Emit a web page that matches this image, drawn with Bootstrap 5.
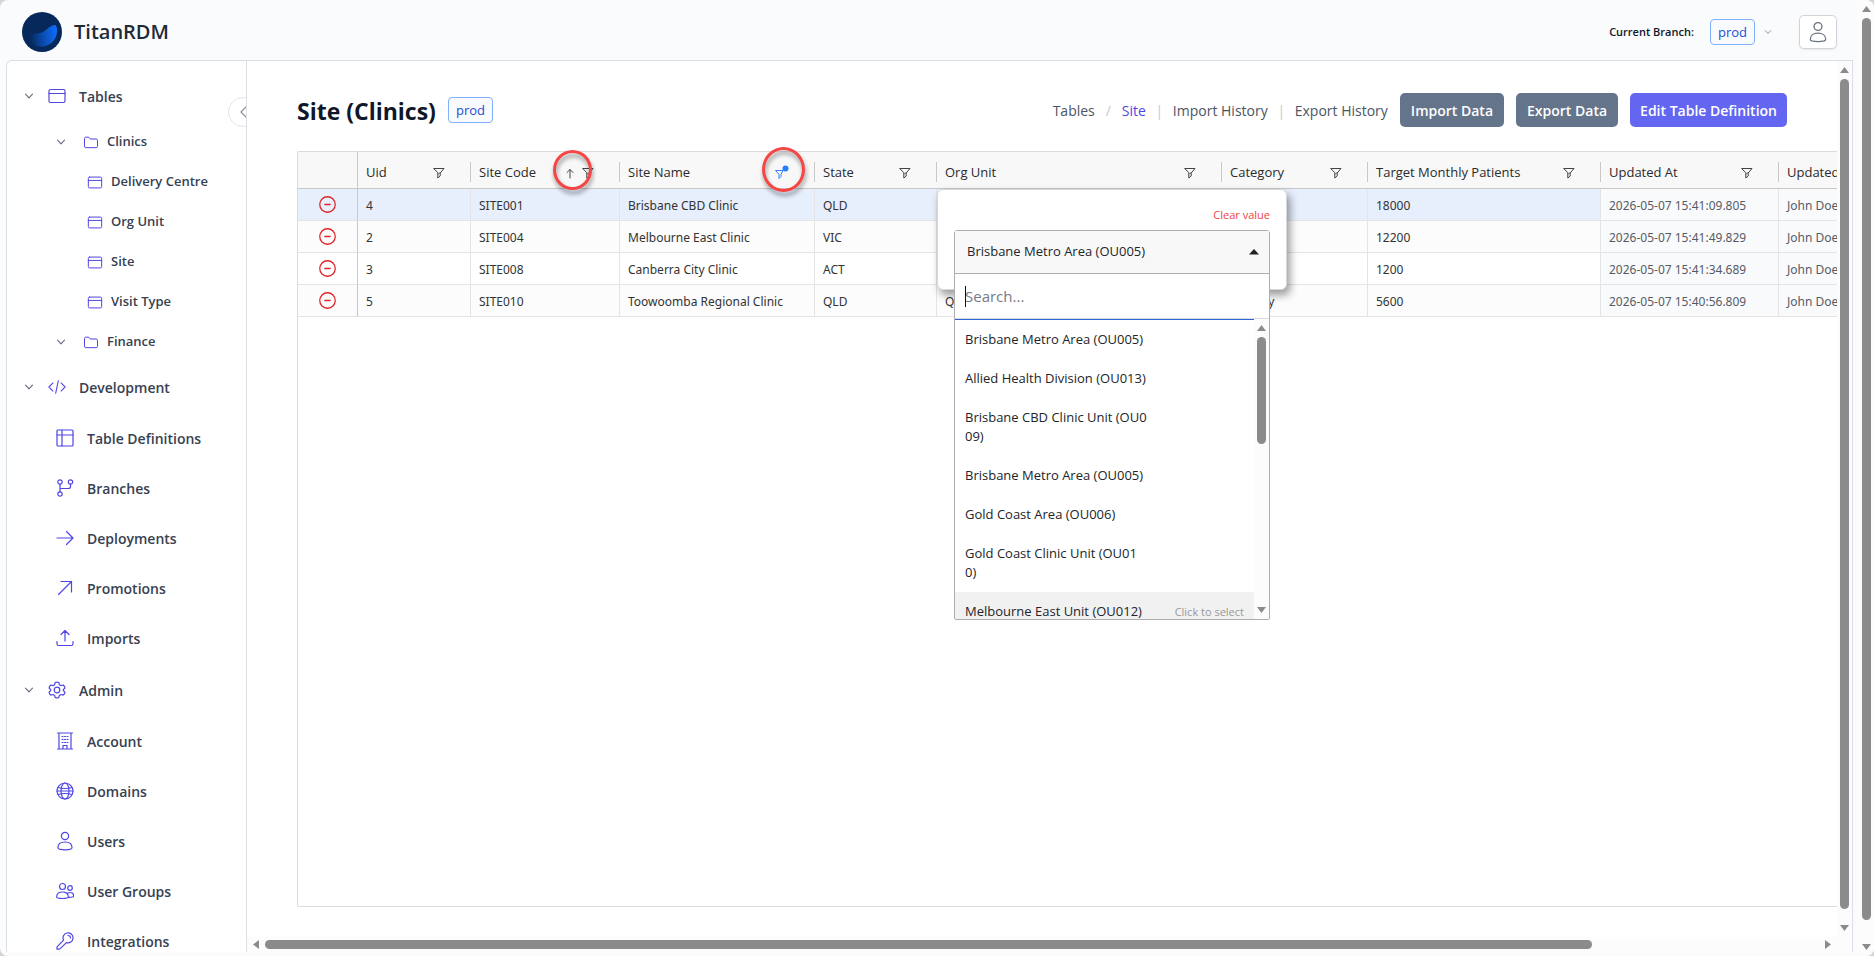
<!DOCTYPE html>
<html lang="en">
<head>
<meta charset="utf-8">
<meta name="viewport" content="width=device-width, initial-scale=1">
<title>TitanRDM - Site (Clinics)</title>
<link href="https://cdn.jsdelivr.net/npm/bootstrap@5.3.0/dist/css/bootstrap.min.css" rel="stylesheet">
<style>
  :root { --line: #dcdee6; --ink: #374151; --indigo: #4f46e5; --thumb: #8b8b8b; }
  html, body { height: 100%; }
  body { background: #d4d4d4; font-family: "Open Sans", "Noto Sans", sans-serif; font-size: 13px; color: #333; overflow: hidden; }
  svg { display: block; flex: none; }
  .ico { fill: none; stroke: currentColor; stroke-width: 1.2; stroke-linecap: round; stroke-linejoin: round; }
  .shell { height: 100vh; background: #fafbfd; border-radius: 8px; overflow: hidden; }
  .topbar { height: 60px; padding: 4px 20px 0 22px; }
  .brand { font-size: 20px; font-weight: 600; color: #1f2937; line-height: 24px; margin-left: 12px; }
  .branch-tag { height: 26px; padding: 0 7px; border: 1px solid #7fb0fb; border-radius: 4px; background: #f8fafe; color: #1d4ed8; font-size: 13px; line-height: 24px; }
  .branch-label { font-size: 11px; font-weight: 600; color: #111827; }
  .branch-chev { margin: 0 27px 0 9px; color: #8b8f98; }
  .avatar-btn { width: 38px; height: 34px; border: 1px solid #d1d5db; border-radius: 5px; background: #fff; color: #6b7280; box-shadow: 0 1px 2px rgba(0,0,0,.08); }
  .frame { margin-left: 6px; margin-right: 4px; margin-bottom: 4px; border: 1px solid var(--line); border-bottom: 0; border-radius: 6px 0 0 0; background: #fff; }

  .side { width: 240px; border-right: 1px solid var(--line); padding-top: 10px; overflow: hidden; position: relative; }
  .side ul { list-style: none; margin: 0; padding: 0; }
  .side a { display: flex; align-items: center; height: 50px; color: var(--ink); text-decoration: none; font-size: 14px; font-weight: 600; }
  .side a .ico { color: var(--indigo); }
  .side a .chev { color: #6b7280; }
  .side .top-link { padding-left: 17px; }
  .side .top-link .chev { margin-right: 14px; }
  .side .top-link span, .side .menu a span { margin-left: 13px; }
  .side .tree { padding-top: 1px; }
  .side .menu { padding: 1px 0 2px; }
  .side .menu a { padding-left: 49px; }
  .side .tree a { height: 40px; font-size: 13px; }
  .side .tree .folder { padding-left: 49px; }
  .side .tree .folder .chev { margin-right: 17px; }
  .side .tree a span { margin-left: 8px; }
  .side .tree .leaf { padding-left: 80px; }
  .collapse-btn { position: absolute; right: -12px; top: 36px; width: 30px; height: 30px; border: 1px solid #e0e2e8; border-radius: 50%; background: #fff; color: #8b8f98; padding: 0 0 0 10px; }

  .page { padding: 32px 0 30px 50px; }
  .page-head { padding-right: 50px; height: 34px; margin-bottom: 24px; }
  .page-head h1 { font-size: 23px; font-weight: 700; color: #0f172a; line-height: 32px; padding-top: 1px; }
  .page-head .branch-tag { margin-left: 12px; }
  .crumbs { font-size: 14px; color: #4b5563; }
  .crumbs a { color: inherit; text-decoration: none; }
  .crumbs .here { color: var(--indigo); }
  .crumbs i { color: #c4c8d0; font-style: normal; width: 27px; text-align: center; }
  .act { height: 34px; border: 0; border-radius: 5px; padding: 0 11px; margin-left: 12px; color: #fff; font-size: 14px; font-weight: 600; white-space: nowrap; }
  .act-slate { background: #64748b; }
  .act-indigo { background: #6366f1; padding: 0 10px; }

  .grid-box { border: 1px solid #dcdcdc; border-right: 0; border-radius: 2px 0 0 2px; overflow-x: clip; overflow-y: visible; }
  .data-grid { table-layout: fixed; width: 1681px; border-collapse: separate; border-spacing: 0; }
  .data-grid th { height: 37px; background: #f8f8f8; border-bottom: 1px solid #c8c8c8; padding: 0 0 0 8px; font-weight: 500; position: relative; white-space: nowrap; color: #2b2b2b; }
  .data-grid th .cap { height: 20px; border-right: 1px solid #c8c8c8; padding: 2px 25px 0 0; margin-top: 4px; }
  .data-grid th .cap .ico { stroke-width: 1; color: #444; }
  .data-grid th:first-child { border-right: 1px solid #c8c8c8; }
  .data-grid td { height: 32px; padding: 2px 0 0 8px; border-right: 1px solid #e4e4e4; border-bottom: 1px solid #e4e4e4; font-family: "Noto Sans", "Open Sans", sans-serif; font-size: 12px; line-height: 20px; white-space: nowrap; overflow: hidden; }
  .data-grid td:first-child { border-right-color: #c8c8c8; padding: 0; }
  .data-grid tr:nth-child(even) td { background: #fcfcfc; }
  .data-grid tr.picked td { background: #e7eefc; }
  .data-grid tbody td:nth-child(n+9) { background: #f9fafc; color: #555b66; }
  .w-act { width: 60px; } .w-uid { width: 113px; } .w-code { width: 149px; } .w-name { width: 195px; } .w-state { width: 122px; }
  .w-org { width: 285px; } .w-cat { width: 146px; } .w-target { width: 233px; } .w-at { width: 178px; } .w-by { width: 200px; }
  .row-del { border: 0; background: none; padding: 0; color: #dc2626; display: block; margin: 0 auto; }
  .ring { position: absolute; border: 3px solid #f64545; border-radius: 50%; filter: drop-shadow(1px 4px 2px rgba(0,0,0,.4)); z-index: 2; }
  .ring-sort { width: 39px; height: 40px; left: 82px; top: -2px; }
  .ring-filter { width: 43px; height: 45px; right: 10px; top: -5px; }

  .filter-pop { position: absolute; left: 0; top: 37px; width: 350px; height: 101px; padding: 16px 16px 0; border-radius: 6px; border: 1px solid #d5d8de; background: #fff; box-shadow: 3px 5px 8px rgba(0,0,0,.4); z-index: 3; font-weight: 400; }
  .clear-link { border: 0; background: none; padding: 0; font-size: 11px; line-height: 18px; color: #ef4444; display: block; margin-left: auto; margin-bottom: 6px; }
  .combo { border: 1px solid #adadad; border-radius: 3px 3px 2px 2px; background: #fff; }
  .combo-head { height: 43px; width: 100%; border: 0; border-bottom: 1px solid #adadad; background: #f8f8f8; padding: 0 10px 0 12px; font-size: 13px; color: #212529; }
  .combo-search { height: 45px; width: 100%; border: 0; border-bottom: 1px solid #dcdcdc; padding: 0 10px; font-size: 15px; color: #212529; outline: 0; }
  .combo-search::placeholder { color: #757b86; opacity: 1; }
  .combo-list { height: 300px; }
  .combo-opts { border-top: 1px solid #2f62d9; overflow: hidden; }
  .combo-opts button { display: flex; align-items: center; width: 100%; border: 0; background: #fff; padding: 10px; text-align: left; font-size: 13px; line-height: 19px; color: #212529; }
  .combo-opts button span { width: 183px; white-space: normal; word-break: break-all; }
  .combo-opts button.hot { background: #f1f1f1; }
  .combo-opts small { font-size: 11px; color: #999; margin-left: auto; }
  .text-cursor { position: absolute; left: 10px; top: 12px; width: 1px; height: 21px; background: #111; }

  .vbar, .hbar { background: #fcfcfc; flex: none; }
  .vbar { width: 15px; padding: 6px 3px; }
  .vbar-page { padding-bottom: 21px; }
  .vbar-window { width: 17px; padding-left: 5px; }
  .hbar { height: 15px; padding: 3px 6px; }
  .hbar-track { padding: 0 6px; }
  .thumb-v { width: 9px; border-radius: 5px; background: var(--thumb); margin: 6px 0 0; }
  .thumb-h { height: 9px; border-radius: 5px; background: var(--thumb); }
  .arrow { fill: var(--thumb); }
</style>
</head>
<body>
<svg width="0" height="0" class="position-absolute" aria-hidden="true">
  <symbol id="i-chev" viewBox="0 0 10 10"><path d="M1.5 3.2 5 6.8l3.5-3.6"/></symbol>
  <symbol id="i-window" viewBox="0 0 18 18"><rect x="1" y="2.5" width="16" height="13" rx="1.5"/><path d="M1 6.5h16"/></symbol>
  <symbol id="i-folder" viewBox="0 0 18 18"><path d="M1.2 4.2a1.6 1.6 0 0 1 1.6-1.6h3.4l2 2.200h7a1.600 1.600 0 0 1 1.600 1.600v7.200a1.600 1.600 0 0 1-1.600 1.600H2.800a1.600 1.600 0 0 1-1.600-1.600z"/></symbol>
  <symbol id="i-code" viewBox="0 0 20 18"><path d="M5.500 4.500 1 9l4.500 4.500M14.500 4.500 19 9l-4.500 4.500M11.500 2l-3 14"/></symbol>
  <symbol id="i-layout" viewBox="0 0 18 18"><rect x="1" y="1" width="16" height="16" rx="1"/><path d="M1 6h16M6 1v16"/></symbol>
  <symbol id="i-branch" viewBox="0 0 18 18"><circle cx="4" cy="3" r="2.200"/><circle cx="4" cy="15" r="2.200"/><circle cx="14.500" cy="3" r="2.200"/><path d="M4 5.200v7.600M4 9.500h8.500q2 0 2-2V5.200"/></symbol>
  <symbol id="i-right" viewBox="0 0 18 18"><path d="M1 9h16M10.500 2.500 17 9l-6.500 6.500"/></symbol>
  <symbol id="i-upright" viewBox="0 0 18 18"><path d="M2.500 15.500 15.500 2.500M5 2.500h10.500V13"/></symbol>
  <symbol id="i-upload" viewBox="0 0 18 18"><path d="M9 12V1.500M5 5.500l4-4 4 4M1 12.500v2.500a1.500 1.500 0 0 0 1.500 1.500h13A1.500 1.500 0 0 0 17 15v-2.500"/></symbol>
  <symbol id="i-gear" viewBox="0 0 18 18"><circle cx="9" cy="9" r="2.800"/><path d="M7.200 1.500Q9 .6 10.800 1.500l.6 2.200 1.500.9 2.300-.6q1.600 1.200 1.700 3l-1.600 1.700v.8l1.600 1.600q-.1 1.800-1.700 3l-2.300-.6-1.500.9-.6 2.100q-1.800.9-3.600 0l-.6-2.100-1.500-.9-2.300.6q-1.600-1.200-1.700-3l1.600-1.600v-.8L1.100 7q.1-1.800 1.700-3l2.300.6 1.500-.9z"/></symbol>
  <symbol id="i-building" viewBox="0 0 18 18"><path d="M3 17V1h12v16M1.500 17h15M1.500 1h15M7 17v-3.500h4V17"/><path d="M6 4.500h1M8.500 4.500h1M11 4.500h1M6 7.500h1M8.500 7.500h1M11 7.500h1M6 10.500h1M8.500 10.500h1M11 10.500h1"/></symbol>
  <symbol id="i-globe" viewBox="0 0 18 18"><circle cx="9" cy="9" r="8"/><ellipse cx="9" cy="9" rx="4" ry="8"/><path d="M2 5.500q7 2 14 0M2 12.500q7-2 14 0M1 9h16"/></symbol>
  <symbol id="i-user" viewBox="0 0 18 20"><circle cx="9" cy="5" r="3.600"/><path d="M2 16.500c0-3.500 3-5.500 7-5.500s7 2 7 5.500q0 1.200-1.300 1.600-5.700 1.400-11.400 0Q2 17.700 2 16.500z"/></symbol>
  <symbol id="i-users" viewBox="0 0 18 18"><circle cx="6.500" cy="4.500" r="3"/><circle cx="14" cy="6" r="2.300"/><path d="M.7 14.800c0-3 2.500-4.800 5.800-4.800s5.800 1.800 5.800 4.800q0 1-1.100 1.200-4.700 1-9.400 0-1.100-.2-1.100-1.200zM11.500 11.300q1-.8 2.500-.8c2.200 0 3.600 1.300 3.600 3.300q0 1-1 1.200-2 .4-4.100.3"/></symbol>
  <symbol id="i-key" viewBox="0 0 18 18"><path d="M7.600 8.200A5 5 0 1 1 10.400 10.600L4.200 16.600Q3.600 17.200 2.800 17.200H1V15.400Q1 14.800 1.500 14.300z"/><path d="M12 3.500a2.600 2.600 0 0 1 2.500 2.500"/></symbol>
  <symbol id="i-funnel" viewBox="0 0 12 12"><path d="M1 1.500h10L7.200 6v3L4.800 11V6z"/><path d="M5.500 7 7 5.500"/></symbol>
  <symbol id="i-minus" viewBox="0 0 16 16"><circle cx="8" cy="8" r="7.300"/><path d="M5.500 8h5"/></symbol>
</svg>

<div class="shell d-flex">
  <div class="d-flex flex-column flex-grow-1" style="min-width:0">
    <header class="topbar d-flex align-items-center flex-shrink-0">
      <svg width="40" height="40" viewBox="0 0 40 40" aria-hidden="true">
        <defs><linearGradient id="wave" x1="0.1" y1="0.4" x2="1" y2="0.3"><stop offset="0" stop-color="#062a5e"/><stop offset=".5" stop-color="#0b50b8"/><stop offset="1" stop-color="#0d6dfd"/></linearGradient></defs>
        <circle cx="20" cy="20" r="20" fill="#07285a"/>
        <path d="M5 20c7 3 14 2 19-2 3-3 6-5 9.500-5 2.500 3 2 10-1 14.500-4.500 7-14 9-20.500 5.500Q6 29 5 20z" fill="url(#wave)"/>
      </svg>
      <div class="brand">TitanRDM</div>
      <div class="ms-auto d-flex align-items-center">
        <span class="branch-label me-3">Current Branch:</span>
        <span class="branch-tag">prod</span>
        <svg class="ico branch-chev" width="8" height="8"><use href="#i-chev"/></svg>
        <button type="button" class="avatar-btn d-flex align-items-center justify-content-center p-0" aria-label="Account"><svg class="ico" width="20" height="22"><use href="#i-user"/></svg></button>
      </div>
    </header>

    <div class="frame d-flex flex-grow-1" style="min-height:0">
      <nav class="side flex-shrink-0" aria-label="Main">
        <ul>
          <li><a href="#" class="top-link"><svg class="ico chev" width="10" height="10"><use href="#i-chev"/></svg><svg class="ico" width="18" height="18"><use href="#i-window"/></svg><span>Tables</span></a>
            <ul class="tree">
              <li><a href="#" class="folder"><svg class="ico chev" width="10" height="10"><use href="#i-chev"/></svg><svg class="ico" width="16" height="15"><use href="#i-folder"/></svg><span>Clinics</span></a></li>
              <li><a href="#" class="leaf"><svg class="ico" width="16" height="15"><use href="#i-window"/></svg><span>Delivery Centre</span></a></li>
              <li><a href="#" class="leaf"><svg class="ico" width="16" height="15"><use href="#i-window"/></svg><span>Org Unit</span></a></li>
              <li><a href="#" class="leaf"><svg class="ico" width="16" height="15"><use href="#i-window"/></svg><span>Site</span></a></li>
              <li><a href="#" class="leaf"><svg class="ico" width="16" height="15"><use href="#i-window"/></svg><span>Visit Type</span></a></li>
              <li><a href="#" class="folder"><svg class="ico chev" width="10" height="10"><use href="#i-chev"/></svg><svg class="ico" width="16" height="15"><use href="#i-folder"/></svg><span>Finance</span></a></li>
            </ul>
          </li>
          <li><a href="#" class="top-link"><svg class="ico chev" width="10" height="10"><use href="#i-chev"/></svg><svg class="ico" width="18" height="18"><use href="#i-code"/></svg><span>Development</span></a>
            <ul class="menu">
              <li><a href="#"><svg class="ico" width="18" height="18"><use href="#i-layout"/></svg><span>Table Definitions</span></a></li>
              <li><a href="#"><svg class="ico" width="18" height="18"><use href="#i-branch"/></svg><span>Branches</span></a></li>
              <li><a href="#"><svg class="ico" width="18" height="18"><use href="#i-right"/></svg><span>Deployments</span></a></li>
              <li><a href="#"><svg class="ico" width="18" height="18"><use href="#i-upright"/></svg><span>Promotions</span></a></li>
              <li><a href="#"><svg class="ico" width="18" height="18"><use href="#i-upload"/></svg><span>Imports</span></a></li>
            </ul>
          </li>
          <li><a href="#" class="top-link"><svg class="ico chev" width="10" height="10"><use href="#i-chev"/></svg><svg class="ico" width="18" height="18"><use href="#i-gear"/></svg><span>Admin</span></a>
            <ul class="menu">
              <li><a href="#"><svg class="ico" width="18" height="18"><use href="#i-building"/></svg><span>Account</span></a></li>
              <li><a href="#"><svg class="ico" width="18" height="18"><use href="#i-globe"/></svg><span>Domains</span></a></li>
              <li><a href="#"><svg class="ico" width="18" height="20"><use href="#i-user"/></svg><span>Users</span></a></li>
              <li><a href="#"><svg class="ico" width="18" height="18"><use href="#i-users"/></svg><span>User Groups</span></a></li>
              <li><a href="#"><svg class="ico" width="18" height="18"><use href="#i-key"/></svg><span>Integrations</span></a></li>
            </ul>
          </li>
        </ul>
        <button type="button" class="collapse-btn" aria-label="Collapse menu"><svg class="ico" width="9" height="14" viewBox="0 0 9 14"><path d="M7 2 2 7l5 5"/></svg></button>
      </nav>

      <div class="d-flex flex-column flex-grow-1" style="min-width:0">
        <main class="page d-flex flex-column flex-grow-1" style="min-height:0">
          <div class="page-head d-flex align-items-center flex-shrink-0">
            <h1 class="m-0 text-nowrap">Site (Clinics)</h1>
            <span class="branch-tag">prod</span>
            <nav class="crumbs ms-auto d-flex align-items-center text-nowrap" aria-label="Breadcrumb">
              <a href="#">Tables</a><i>/</i><a href="#" class="here">Site</a><i>|</i><a href="#">Import History</a><i>|</i><a href="#">Export History</a>
            </nav>
            <button type="button" class="act act-slate">Import Data</button>
            <button type="button" class="act act-slate">Export Data</button>
            <button type="button" class="act act-indigo">Edit Table Definition</button>
          </div>

          <div class="grid-box flex-grow-1">
            <table class="data-grid">
              <colgroup><col class="w-act"><col class="w-uid"><col class="w-code"><col class="w-name"><col class="w-state"><col class="w-org"><col class="w-cat"><col class="w-target"><col class="w-at"><col class="w-by"></colgroup>
              <thead>
                <tr>
                  <th></th>
                  <th><div class="cap d-flex align-items-center">Uid<svg class="ico ms-auto" width="12" height="12"><use href="#i-funnel"/></svg></div></th>
                  <th><div class="cap d-flex align-items-center">Site Code<svg class="ico ms-auto" width="8" height="11" viewBox="0 0 8 11"><path d="M4 10V1.500M1 4.500l3-3 3 3"/></svg><svg class="ico ms-2" width="12" height="12"><use href="#i-funnel"/></svg></div><span class="ring ring-sort"></span></th>
                  <th><div class="cap d-flex align-items-center">Site Name<svg class="ms-auto" width="14" height="18" viewBox="2 0 14 18"><path d="M2.500 6.500h7.500L8 10.500v2l-2 2v-4z" fill="none" stroke="#2f80fa" stroke-width="1" stroke-linejoin="round"/><circle cx="12.500" cy="4.500" r="3" fill="#2480ff"/></svg></div><span class="ring ring-filter"></span></th>
                  <th><div class="cap d-flex align-items-center">State<svg class="ico ms-auto" width="12" height="12"><use href="#i-funnel"/></svg></div></th>
                  <th><div class="cap d-flex align-items-center">Org Unit<svg class="ico ms-auto" width="12" height="12"><use href="#i-funnel"/></svg></div>
                    <div class="filter-pop">
                      <button type="button" class="clear-link">Clear value</button>
                      <div class="combo">
                        <button type="button" class="combo-head d-flex align-items-center justify-content-between" aria-expanded="true">Brisbane Metro Area (OU005)<svg width="10" height="6" viewBox="0 0 10 6"><path d="M0 5.500 5 0l5 5.500z" fill="#222"/></svg></button>
                        <div class="position-relative">
                          <input type="text" class="combo-search d-block" placeholder="Search..." aria-label="Search org units">
                          <span class="text-cursor"></span>
                        </div>
                        <div class="combo-list d-flex">
                          <div class="combo-opts flex-grow-1">
                            <button type="button"><span>Brisbane Metro Area (OU005)</span></button>
                            <button type="button"><span>Allied Health Division (OU013)</span></button>
                            <button type="button"><span>Brisbane CBD Clinic Unit (OU009)</span></button>
                            <button type="button"><span>Brisbane Metro Area (OU005)</span></button>
                            <button type="button"><span>Gold Coast Area (OU006)</span></button>
                            <button type="button"><span>Gold Coast Clinic Unit (OU010)</span></button>
                            <button type="button" class="hot"><span>Melbourne East Unit (OU012)</span><small>Click to select</small></button>
                          </div>
                          <div class="vbar d-flex flex-column">
                            <svg class="arrow" width="9" height="6" viewBox="0 0 9 6"><path d="M0 6 4.500 0 9 6z"/></svg>
                            <div class="thumb-v" style="height:107px"></div>
                            <svg class="arrow mt-auto" width="9" height="6" viewBox="0 0 9 6"><path d="M0 0h9L4.500 6z"/></svg>
                          </div>
                        </div>
                      </div>
                    </div>
                  </th>
                  <th><div class="cap d-flex align-items-center">Category<svg class="ico ms-auto" width="12" height="12"><use href="#i-funnel"/></svg></div></th>
                  <th><div class="cap d-flex align-items-center">Target Monthly Patients<svg class="ico ms-auto" width="12" height="12"><use href="#i-funnel"/></svg></div></th>
                  <th><div class="cap d-flex align-items-center">Updated At<svg class="ico ms-auto" width="12" height="12"><use href="#i-funnel"/></svg></div></th>
                  <th><div class="cap d-flex align-items-center">Updated By</div></th>
                </tr>
              </thead>
              <tbody>
                <tr class="picked"><td><button type="button" class="row-del" aria-label="Delete row"><svg class="ico" width="17" height="17"><use href="#i-minus"/></svg></button></td><td>4</td><td>SITE001</td><td>Brisbane CBD Clinic</td><td>QLD</td><td></td><td></td><td>18000</td><td>2026-05-07 15:41:09.805</td><td>John Doe</td></tr>
                <tr><td><button type="button" class="row-del" aria-label="Delete row"><svg class="ico" width="17" height="17"><use href="#i-minus"/></svg></button></td><td>2</td><td>SITE004</td><td>Melbourne East Clinic</td><td>VIC</td><td></td><td></td><td>12200</td><td>2026-05-07 15:41:49.829</td><td>John Doe</td></tr>
                <tr><td><button type="button" class="row-del" aria-label="Delete row"><svg class="ico" width="17" height="17"><use href="#i-minus"/></svg></button></td><td>3</td><td>SITE008</td><td>Canberra City Clinic</td><td>ACT</td><td></td><td></td><td>1200</td><td>2026-05-07 15:41:34.689</td><td>John Doe</td></tr>
                <tr><td><button type="button" class="row-del" aria-label="Delete row"><svg class="ico" width="17" height="17"><use href="#i-minus"/></svg></button></td><td>5</td><td>SITE010</td><td>Toowoomba Regional Clinic</td><td>QLD</td><td>QLD</td><td>Primary</td><td>5600</td><td>2026-05-07 15:40:56.809</td><td>John Doe</td></tr>
              </tbody>
            </table>
          </div>
        </main>
        <div class="hbar d-flex align-items-center">
          <svg class="arrow" width="6" height="9" viewBox="0 0 6 9"><path d="M6 0v9L0 4.500z"/></svg>
          <div class="hbar-track flex-grow-1"><div class="thumb-h" style="width:85.400%"></div></div>
          <svg class="arrow" width="6" height="9" viewBox="0 0 6 9"><path d="M0 0v9l6-4.500z"/></svg>
        </div>
      </div>

      <div class="vbar vbar-page d-flex flex-column">
        <svg class="arrow" width="9" height="6" viewBox="0 0 9 6"><path d="M0 6 4.500 0 9 6z"/></svg>
        <div class="thumb-v flex-grow-1 mb-3"></div>
        <svg class="arrow" width="9" height="6" viewBox="0 0 9 6"><path d="M0 0h9L4.500 6z"/></svg>
      </div>
    </div>
  </div>

  <div class="vbar vbar-window d-flex flex-column">
    <svg class="arrow" width="9" height="6" viewBox="0 0 9 6"><path d="M0 6 4.500 0 9 6z"/></svg>
    <div class="thumb-v flex-grow-1 mb-4"></div>
    <svg class="arrow" width="9" height="6" viewBox="0 0 9 6"><path d="M0 0h9L4.500 6z"/></svg>
  </div>
</div>
<script src="https://cdn.jsdelivr.net/npm/bootstrap@5.3.0/dist/js/bootstrap.bundle.min.js"></script>
</body>
</html>
